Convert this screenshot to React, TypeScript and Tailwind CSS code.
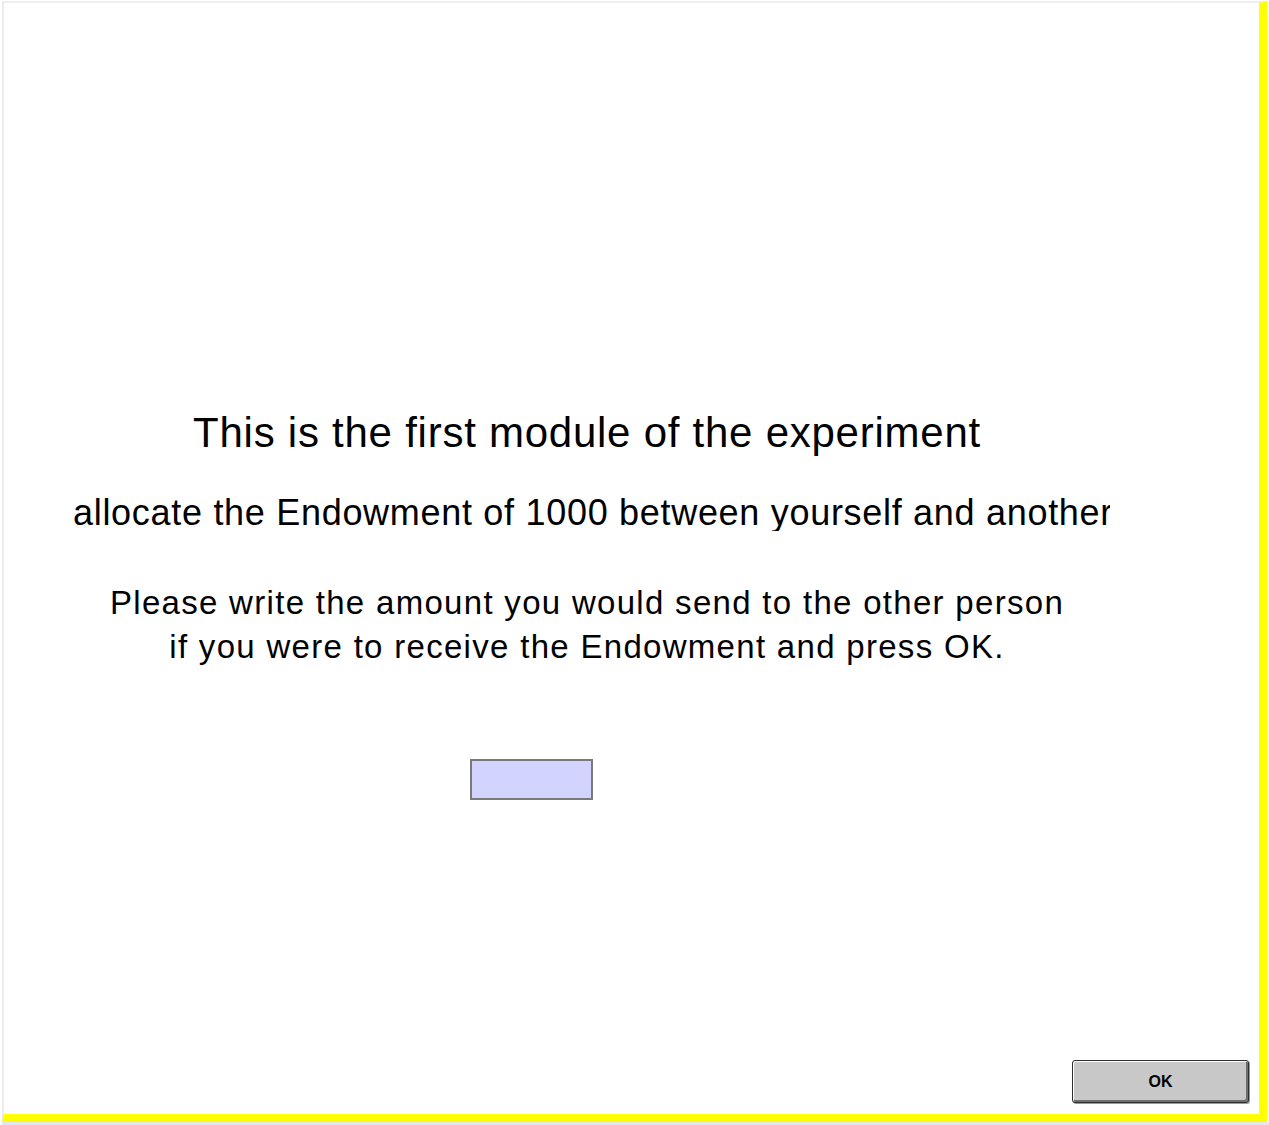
export default function App() {
  return (
    <div
      className="w-[1269px] h-[1125px] bg-white pl-[2px] pt-[1px] overflow-hidden flex flex-col"
      style={{ fontFamily: '"Liberation Sans", Arial, sans-serif' }}
    >
      <div className="w-[1265px] h-[1121px] border-l-2 border-t-2 border-r-8 border-b-8 border-l-[#ececec] border-t-[#efefef] border-r-[#ffff00] border-b-[#ffff00] flex flex-col text-black">
        <div className="ml-[60px] w-[1046px] flex flex-col">
          <div className="mt-[409px] text-[42px] leading-[42px] tracking-[0.75px] text-center whitespace-nowrap">
            This is the first module of the experiment
          </div>
          <div className="mt-[41px] text-[36px] leading-[36px] tracking-[0.7px] whitespace-nowrap overflow-hidden pl-[9px]">
            allocate the Endowment of 1000 between yourself and another person
          </div>
          <div className="mt-[50px] text-[33px] leading-[44px] tracking-[1.3px] text-center whitespace-nowrap">
            <div>Please write the amount you would send to the other person</div>
            <div>if you were to receive the Endowment and press OK.</div>
          </div>
          <div className="mt-[90px] ml-[406px] w-[123px] h-[41px] bg-[#d3d3ff] border-2 border-[#7a7a7a]" />
        </div>
        <div className="mt-auto mb-[11px] mr-[10px] self-end">
          <div className="w-[177px] h-[43px] bg-[#c8c8c8] border-[1.5px] border-[#2e2e2e] rounded-[3px] shadow-[inset_1px_1px_0_#ffffff,inset_-2px_-2px_0_#6e6e6e,1px_1px_0_#9a9a9a] flex items-center justify-center text-[16px] font-bold">
            OK
          </div>
        </div>
      </div>
      <div className="h-[3px] w-full bg-[#e1e7ef]" />
    </div>
  );
}
